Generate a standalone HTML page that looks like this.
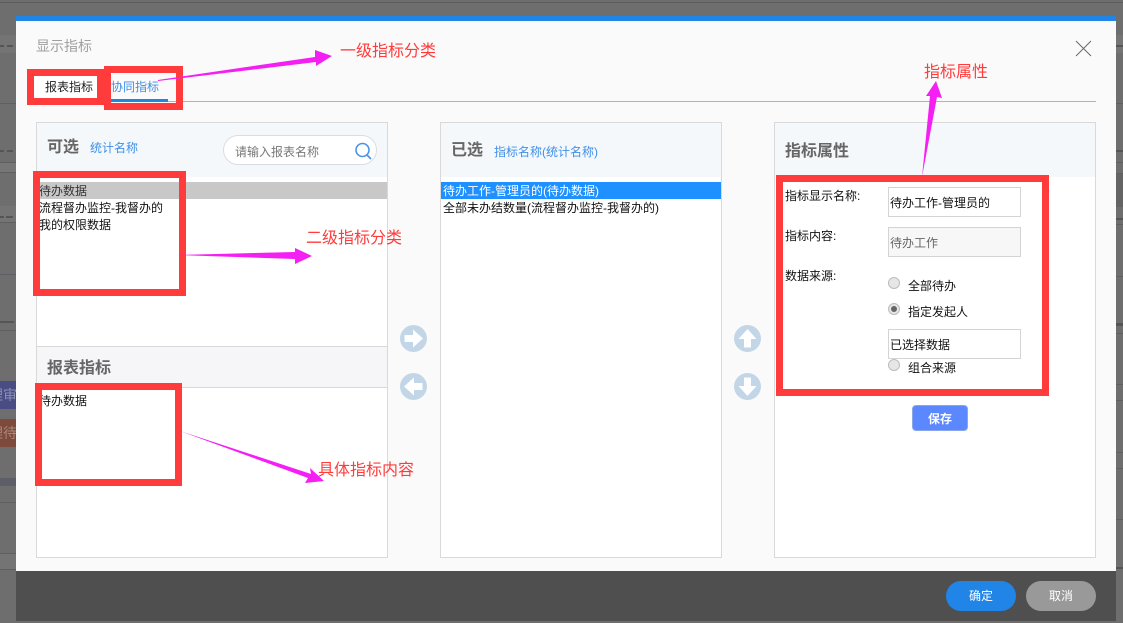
<!DOCTYPE html>
<html lang="zh">
<head>
<meta charset="utf-8">
<title>显示指标</title>
<style>
html,body{margin:0;padding:0;width:1123px;height:623px;overflow:hidden;background:#6e6e6e}
body{position:relative;font-family:"Liberation Sans","Noto Sans CJK SC",sans-serif;font-size:12px;color:#111}
.a{position:absolute;box-sizing:border-box}
.t{position:absolute;white-space:nowrap;line-height:17px;margin-top:1px}
.rb{position:absolute;box-sizing:border-box;border:7px solid #ff3b3b}
.panel{position:absolute;box-sizing:border-box;background:#fff;border:1px solid #d9d9d9}
.head{position:absolute;background:#f5f8fa}
.h{position:absolute;white-space:nowrap;font-size:16px;font-weight:700;color:#666;line-height:22px}
.blue{color:#3f8fe8}
.red{position:absolute;white-space:nowrap;color:#ff3b3b;font-size:16px;line-height:20px;font-family:"Liberation Sans","WenQuanYi Zen Hei",sans-serif}
.inp{position:absolute;box-sizing:border-box;left:888px;width:133px;height:30px;border:1px solid #d4d4d4;background:#fff;line-height:31px;padding-left:1px;white-space:nowrap}
.radio{position:absolute;box-sizing:border-box;width:12px;height:12px;left:888px;border-radius:50%;border:1px solid #bcbcbc;background:#e6e6e6}
.btn{position:absolute;top:581px;width:70px;height:30px;border-radius:15px;color:#fff;text-align:center;line-height:31px}
svg{position:absolute;left:0;top:0}
</style>
</head>
<body>
<!-- dim background -->
<div class="a" style="left:0;top:2px;width:1123px;height:1px;background:#5c5c5c"></div>
<div class="a" style="left:0;top:52px;width:16px;height:1px;background:#5f6068"></div>
<div class="a" style="left:0;top:35px;width:16px;height:18px;background:#747474"></div>
<div class="a" style="left:0;top:45px;width:4px;height:2px;background:#555"></div>
<div class="a" style="left:7px;top:45px;width:6px;height:2px;background:#555"></div>
<div class="a" style="left:0;top:103px;width:16px;height:1px;background:#5f5f5f"></div>
<div class="a" style="left:0;top:150px;width:4px;height:2px;background:#555"></div>
<div class="a" style="left:7px;top:150px;width:6px;height:2px;background:#555"></div>
<div class="a" style="left:0;top:162px;width:16px;height:11px;background:#767676;border-top:1px solid #5f5f5f;border-bottom:1px solid #5f5f5f"></div>
<div class="a" style="left:0;top:206px;width:16px;height:17px;background:#747474;border-bottom:1px solid #5f5f5f"></div>
<div class="a" style="left:0;top:216px;width:4px;height:2px;background:#555"></div>
<div class="a" style="left:6px;top:216px;width:7px;height:2px;background:#555"></div>
<div class="a" style="left:0;top:274px;width:16px;height:1px;background:#5f5f68"></div>
<div class="a" style="left:0;top:321px;width:14px;height:2px;background:#555"></div>
<div class="a" style="left:0;top:330px;width:16px;height:1px;background:#5f5f5f"></div>
<div class="a" style="left:0;top:381px;width:16px;height:28px;background:#4a4d84;color:#8d8fb0;font-size:14px;line-height:28px;overflow:hidden"><span style="position:absolute;left:-11px;top:0;white-space:nowrap">理审</span></div>
<div class="a" style="left:0;top:419px;width:16px;height:28px;background:#7e4a3c;color:#a8877e;font-size:14px;line-height:28px;overflow:hidden"><span style="position:absolute;left:-11px;top:0;white-space:nowrap">理待</span></div>
<div class="a" style="left:0;top:478px;width:16px;height:8px;background:#5d5f68"></div>
<div class="a" style="left:0;top:502px;width:16px;height:1px;background:#5f5f5f"></div>
<div class="a" style="left:0;top:553px;width:16px;height:17px;background:#747474;border-top:1px solid #5f5f5f;border-bottom:1px solid #5f5f5f"></div>
<div class="a" style="left:1116px;top:35px;width:7px;height:18px;background:#757575"></div>
<div class="a" style="left:1116px;top:45px;width:7px;height:2px;background:#555"></div>
<div class="a" style="left:1116px;top:103px;width:7px;height:1px;background:#5f5f5f"></div>
<div class="a" style="left:1116px;top:150px;width:7px;height:2px;background:#555"></div>
<div class="a" style="left:1116px;top:162px;width:7px;height:1px;background:#5f5f5f"></div>
<div class="a" style="left:1116px;top:173px;width:7px;height:34px;background:#646464;border-top:1px solid #5f5f5f"></div>
<div class="a" style="left:1116px;top:218px;width:7px;height:2px;background:#555"></div>
<div class="a" style="left:1116px;top:224px;width:7px;height:1px;background:#5f5f5f"></div>
<div class="a" style="left:1116px;top:276px;width:7px;height:1px;background:#5f5f5f"></div>
<div class="a" style="left:1116px;top:323px;width:7px;height:3px;background:#555"></div>
<div class="a" style="left:1116px;top:333px;width:7px;height:1px;background:#5f5f5f"></div>
<div class="a" style="left:1116px;top:384px;width:7px;height:1px;background:#5f5f5f"></div>
<div class="a" style="left:1116px;top:400px;width:7px;height:1px;background:#5f5f5f"></div>
<div class="a" style="left:1116px;top:452px;width:7px;height:1px;background:#5f5f5f"></div>
<div class="a" style="left:1116px;top:468px;width:7px;height:1px;background:#5f5f5f"></div>
<div class="a" style="left:1116px;top:519px;width:7px;height:1px;background:#5f5f5f"></div>
<div class="a" style="left:1116px;top:567px;width:7px;height:2px;background:#555"></div>

<!-- modal -->
<div class="a" style="left:16px;top:16px;width:1100px;height:555px;background:#fafafa"></div>
<div class="a" style="left:16px;top:16px;width:1100px;height:5px;background:#2185e8"></div>
<div class="a" style="left:16px;top:571px;width:1100px;height:50px;background:#4f4f4f"></div>
<div class="t" style="left:36px;top:38px;font-size:14px;line-height:16px;color:#a0a0a0;margin-top:0">显示指标</div>

<!-- tabs -->
<div class="a" style="left:36px;top:101px;width:1060px;height:1px;background:#85bdef"></div>
<div class="a" style="left:111px;top:99px;width:57px;height:3px;background:#2185e8"></div>

<!-- left panel -->
<div class="panel" style="left:36px;top:122px;width:352px;height:436px"></div>
<div class="head" style="left:37px;top:123px;width:350px;height:54px"></div>
<div class="h" style="left:47px;top:137px">可选</div>
<div class="t blue" style="left:90px;top:139px">统计名称</div>
<div class="a" style="left:223px;top:135px;width:154px;height:30px;border:1px solid #d9dde3;border-radius:15px;background:#fff"></div>
<div class="t" style="left:235px;top:143px;color:#777">请输入报表名称</div>
<div class="a" style="left:37px;top:182px;width:350px;height:17px;background:#c8c8c8"></div>
<div class="t" style="left:39px;top:182px;color:#333">待办数据</div>
<div class="t" style="left:39px;top:199px">流程督办监控-我督办的</div>
<div class="t" style="left:39px;top:216px">我的权限数据</div>
<div class="a" style="left:37px;top:346px;width:350px;height:42px;background:#f6f6f8;border-top:1px solid #d9d9d9;border-bottom:1px solid #d9d9d9"></div>
<div class="h" style="left:47px;top:358px">报表指标</div>
<div class="t" style="left:39px;top:392px">待办数据</div>

<!-- middle panel -->
<div class="panel" style="left:440px;top:122px;width:282px;height:436px"></div>
<div class="head" style="left:441px;top:123px;width:280px;height:54px"></div>
<div class="h" style="left:451px;top:140px">已选</div>
<div class="t blue" style="left:494px;top:143px">指标名称(统计名称)</div>
<div class="a" style="left:441px;top:182px;width:280px;height:17px;background:#1e90ff"></div>
<div class="t" style="left:443px;top:182px;color:#fff">待办工作-管理员的(待办数据)</div>
<div class="t" style="left:443px;top:199px">全部未办结数量(流程督办监控-我督办的)</div>

<!-- right panel -->
<div class="panel" style="left:774px;top:122px;width:322px;height:436px"></div>
<div class="head" style="left:775px;top:123px;width:320px;height:54px"></div>
<div class="h" style="left:785px;top:141px">指标属性</div>
<div class="t" style="left:785px;top:187px">指标显示名称:</div>
<div class="t" style="left:785px;top:227px">指标内容:</div>
<div class="t" style="left:785px;top:267px">数据来源:</div>
<div class="inp" style="top:187px">待办工作-管理员的</div>
<div class="inp" style="top:227px;background:#f7f7f7;color:#666">待办工作</div>
<div class="radio" style="top:277px"></div>
<div class="t" style="left:908px;top:277px">全部待办</div>
<div class="radio" style="top:303px"></div>
<div class="a" style="left:891px;top:306px;width:6px;height:6px;border-radius:50%;background:#666"></div>
<div class="t" style="left:908px;top:303px">指定发起人</div>
<div class="inp" style="top:329px">已选择数据</div>
<div class="radio" style="top:359px"></div>
<div class="t" style="left:908px;top:359px">组合来源</div>
<div class="a" style="left:912px;top:405px;width:56px;height:26px;border-radius:4px;background:#5b87ff;border:1px solid #8aa6e8;color:#fff;font-weight:700;text-align:center;line-height:26px">保存</div>

<!-- footer buttons -->
<div class="btn" style="left:946px;background:#2185e8">确定</div>
<div class="btn" style="left:1026px;background:#999">取消</div>

<!-- red boxes -->
<div class="rb" style="left:27px;top:69px;width:77px;height:36px;background:#fff"></div>
<div class="t" style="left:45px;top:78px;color:#222">报表指标</div>
<div class="rb" style="left:104px;top:66px;width:79px;height:44px"></div>
<div class="t blue" style="left:111px;top:78px">协同指标</div>
<div class="rb" style="left:33px;top:171px;width:153px;height:125px"></div>
<div class="rb" style="left:35px;top:383px;width:147px;height:103px"></div>
<div class="rb" style="left:776px;top:175px;width:273px;height:221px"></div>

<!-- svg overlays -->
<svg width="1123" height="623" viewBox="0 0 1123 623" fill="none">
  <!-- search -->
  <circle cx="362.500" cy="150" r="6.500" stroke="#4a94ec" stroke-width="1.600"/>
  <path d="M367 155L371 159" stroke="#4a94ec" stroke-width="1.800"/>
  <!-- close -->
  <path d="M1076 41L1091 56M1091 41L1076 56" stroke="#6a6a6a" stroke-width="1"/>
  <!-- arrows in circles -->
  <circle cx="413.500" cy="338.500" r="13.500" fill="#c2d6e8"/>
  <path d="M404.500 335H413V329.500L423 338.500L413 347.500V342H404.500Z" fill="#fff"/>
  <circle cx="413.500" cy="386.500" r="13.500" fill="#c2d6e8"/>
  <path d="M422.500 383H414V377.500L404 386.500L414 395.500V390H422.500Z" fill="#fff"/>
  <circle cx="747.500" cy="338.500" r="13.500" fill="#c2d6e8"/>
  <path d="M744 347.500V339H738.500L747.500 329L756.500 339H751V347.500Z" fill="#fff"/>
  <circle cx="747.500" cy="386.500" r="13.500" fill="#c2d6e8"/>
  <path d="M744 377.500V386H738.500L747.500 396L756.500 386H751V377.500Z" fill="#fff"/>
  <!-- magenta callouts -->
  <g fill="#f31ff3">
    <polygon points="158,80 315,57 315,50 332,56 316,66 316,62 158,81"/>
    <polygon points="177,255 295,252 295,248 312,256 295,264 295,259"/>
    <polygon points="180,431 311,474 310,468 324,481 305,483 308,478"/>
    <polygon points="922,177 930,96 926,96 936,81 942,98 937,97"/>
  </g>
</svg>

<!-- red annotations -->
<div class="red" style="left:340px;top:42px">一级指标分类</div>
<div class="red" style="left:306px;top:229px">二级指标分类</div>
<div class="red" style="left:318px;top:461px">具体指标内容</div>
<div class="red" style="left:924px;top:63px">指标属性</div>
</body>
</html>
